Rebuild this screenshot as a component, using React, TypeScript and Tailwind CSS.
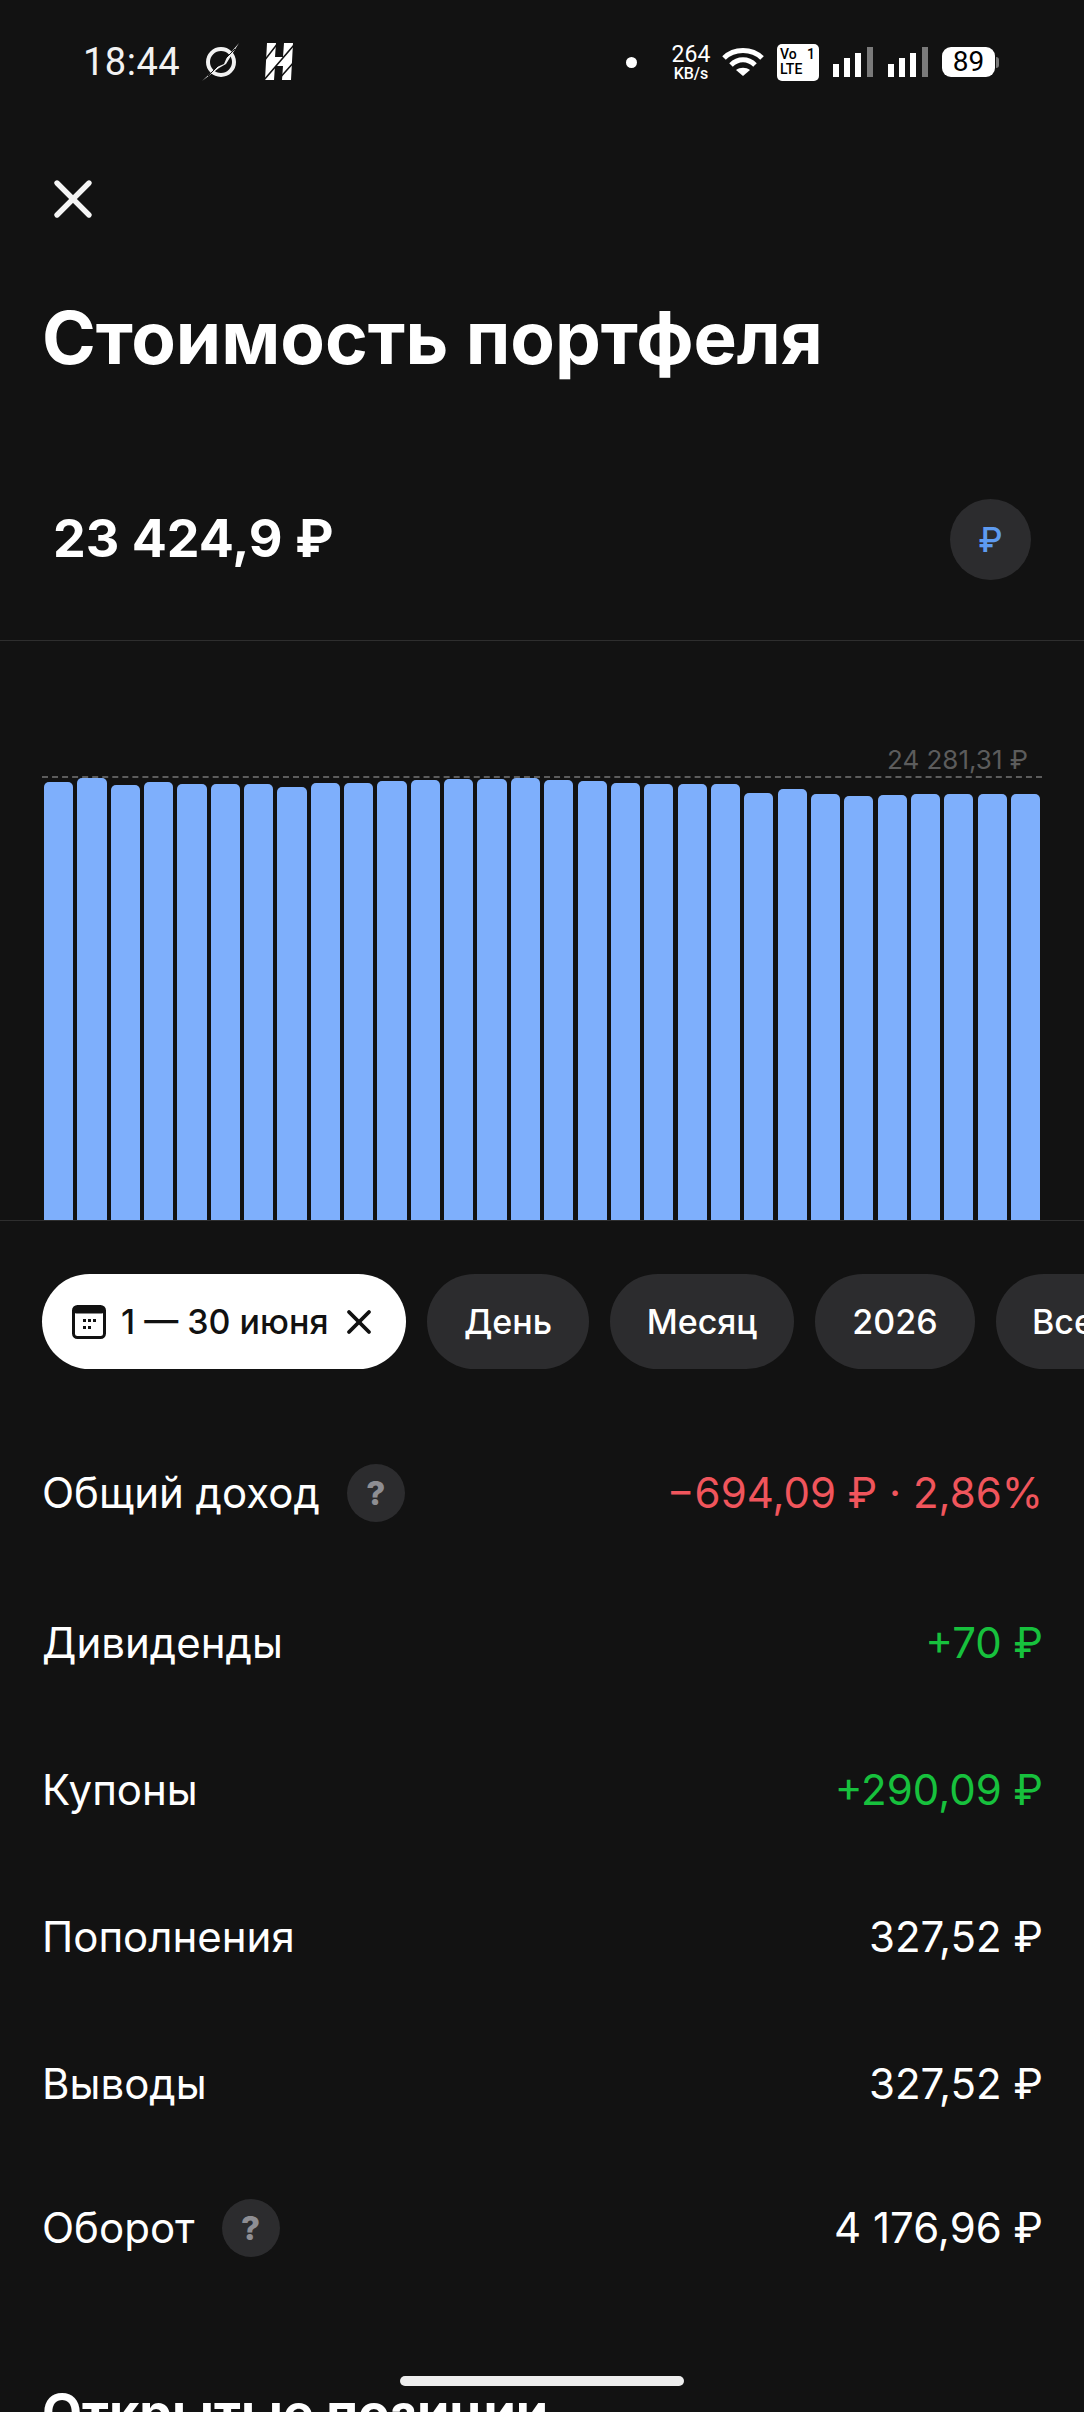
import { X } from "lucide-react"

const font = "font-['Inter','Noto_Sans',sans-serif]"

const tops = [782, 778, 785, 782, 784, 784, 784, 787, 783, 783, 781, 780, 779, 779, 778, 780, 781, 783, 784, 784, 784, 793, 789, 794, 796, 795, 794, 794, 794, 794]

const rows = [
  { label: "Общий доход", help: true, value: "−694,09 ₽ · 2,86%", color: "text-[#f0555c]", gap: "mt-[94px]" },
  { label: "Дивиденды", help: false, value: "+70 ₽", color: "text-[#17c13d]", gap: "mt-[90px]" },
  { label: "Купоны", help: false, value: "+290,09 ₽", color: "text-[#17c13d]", gap: "mt-[87px]" },
  { label: "Пополнения", help: false, value: "327,52 ₽", color: "text-white", gap: "mt-[87px]" },
  { label: "Выводы", help: false, value: "327,52 ₽", color: "text-white", gap: "mt-[87px]" },
  { label: "Оборот", help: true, value: "4 176,96 ₽", color: "text-white", gap: "mt-[84px]" },
]

function Signal() {
  return (
    <svg width="40" height="30" viewBox="0 0 40 30">
      <rect x="0" y="17" width="6" height="13" fill="#fff" />
      <rect x="11" y="11" width="6" height="19" fill="#fff" />
      <rect x="22" y="6" width="6" height="24" fill="#fff" />
      <rect x="34" y="0" width="6" height="30" fill="#7a7a7a" />
    </svg>
  )
}

function StatusBar() {
  return (
    <div className="h-[124px] pl-[83px] pr-[85px] flex items-center justify-between">
      <div className="flex items-center">
        <span className="font-['Roboto',sans-serif] text-[38px] text-[#f2f2f2] w-[119px] leading-none tracking-[0.5px]">18:44</span>
        <svg width="38" height="38" viewBox="0 0 38 38">
          <circle cx="19" cy="19" r="13" fill="none" stroke="#f2f2f2" strokeWidth="4" />
          <path d="M0 38 L15 24 L22 21 L25 14 L37 0 L24 21 L17 25 Z" fill="#f2f2f2" />
          <path d="M6 33 L33 6" stroke="#111" strokeWidth="1" />
        </svg>
        <svg width="30" height="38" viewBox="0 0 30 38" className="ml-[24px]">
          <path d="M3 0 H12 L11 14 H19 L20 0 H29 L27 37 H18 L19 23 H11 L10 37 H1 Z" fill="#fff" />
          <path d="M0 18 L14 0 M0 37 L30 2 M14 37 L30 19" stroke="#111" strokeWidth="1.5" />
        </svg>
      </div>
      <div className="flex items-center">
        <div className="w-[11px] h-[11px] rounded-full bg-white" />
        <div className="ml-[34px] w-[40px] flex flex-col items-center font-['Roboto',sans-serif] text-white leading-none">
          <span className="text-[23px] h-[21px] leading-[21px]">264</span>
          <span className="text-[16px] h-[15px] leading-[17px] font-medium">KB/s</span>
        </div>
        <svg width="42" height="30" viewBox="0 0 42 30" className="ml-[11px]" fill="none" stroke="#fff" strokeWidth="5">
          <path d="M2 11 C12 1 30 1 40 11" />
          <path d="M9 18 C16 11 26 11 33 18" />
          <path d="M21 29 L14 23 C18 20 24 20 28 23 Z" fill="#fff" stroke="none" />
        </svg>
        <div className="ml-[13px] w-[42px] h-[37px] rounded-[5px] bg-white text-black font-['Roboto',sans-serif] font-medium text-[14px] leading-[15px] px-[3px] pt-[3px]">
          <div className="flex justify-between pr-[1px]"><span>Vo</span><span>1</span></div>
          <div>LTE</div>
        </div>
        <div className="ml-[14px]"><Signal /></div>
        <div className="ml-[15px]"><Signal /></div>
        <div className="ml-[14px] w-[53px] h-[30px] rounded-[9px] bg-white text-black font-['Roboto',sans-serif] text-[28px] leading-[30px] text-center">89</div>
        <div className="ml-[1px] w-[3px] h-[11px] bg-[#777] rounded-r-sm" />
      </div>
    </div>
  )
}

function Help() {
  return (
    <div className="w-[58px] h-[58px] rounded-full bg-[#2c2c2e] flex items-center justify-center text-[#8e8e93] text-[33px] font-extrabold leading-none">?</div>
  )
}

export default function App() {
  return (
    <div className={`relative w-[1084px] h-[2412px] overflow-hidden bg-[#121212] text-white ${font}`}>
      <StatusBar />

      <div className="h-[150px] pl-[41px] flex items-center">
        <X size={64} strokeWidth={2} color="#f5f5f5" />
      </div>

      <div className="h-[128px] pl-[42px] flex items-center text-[72.8px] font-bold leading-none">
        Стоимость портфеля
      </div>

      <div className="mt-[69px] mb-[33px] h-[136px] pl-[53px] pr-[53px] flex items-center justify-between">
        <span className="text-[52px] font-bold leading-none">23 424,9 ₽</span>
        <div className="w-[81px] h-[81px] rounded-full bg-[#2c2c2e] flex items-center justify-center text-[#5e9bf0] text-[34px] font-medium">₽</div>
      </div>

      <div className="relative h-[581px] border-y border-[#2e2e2e] px-[44px] flex items-end gap-[4.2px]">
        <div className="absolute right-[56px] top-[106px] text-[26px] leading-none text-[#5c5c5c]">24 281,31 ₽</div>
        <div className="absolute left-[42px] right-[42px] top-[135px] border-t-2 border-dashed border-[#5c5c5c]" />
        {tops.map((t, i) => (
          <div key={i} className="flex-1 bg-[#7eaffc] rounded-t-[5px]" style={{ height: 1220 - t }} />
        ))}
      </div>

      <div className="mt-[53px] h-[95px] pl-[42px] flex gap-[21px] text-[34px] font-medium leading-none whitespace-nowrap">
        <div className="w-[364px] shrink-0 rounded-full bg-white text-[#111] flex items-center pl-[30px]">
          <svg width="34" height="34" viewBox="0 0 34 34" className="shrink-0">
            <rect x="1.5" y="1.5" width="31" height="31" rx="4" fill="none" stroke="#111" strokeWidth="3" />
            <rect x="1.5" y="1.5" width="31" height="7" rx="3" fill="#111" />
            <g fill="#111">
              <rect x="11" y="14" width="3" height="3" />
              <rect x="16" y="14" width="3" height="3" />
              <rect x="21" y="14" width="3" height="3" />
              <rect x="11" y="21" width="3" height="3" />
              <rect x="16" y="21" width="3" height="3" />
            </g>
          </svg>
          <span className="ml-[15px]">1 — 30 июня</span>
          <X size={40} strokeWidth={2.3} className="ml-[10px] shrink-0" />
        </div>
        <div className="shrink-0 w-[162px] rounded-full bg-[#2c2c2e] flex items-center justify-center">День</div>
        <div className="shrink-0 w-[184px] rounded-full bg-[#2c2c2e] flex items-center justify-center">Месяц</div>
        <div className="shrink-0 w-[160px] rounded-full bg-[#2c2c2e] flex items-center justify-center">2026</div>
        <div className="shrink-0 w-[160px] rounded-full bg-[#2c2c2e] flex items-center pl-[36px]">Все</div>
      </div>

      <div className="pl-[42px] pr-[41px]">
        {rows.map((r) => (
          <div key={r.label} className={`h-[60px] flex items-center justify-between text-[42px] leading-none ${r.gap}`}>
            <div className="flex items-center gap-[27px]">
              <span>{r.label}</span>
              {r.help && <Help />}
            </div>
            <span className={r.color}>{r.value}</span>
          </div>
        ))}
      </div>

      <div className="mt-[129px] pl-[42px] text-[52px] font-bold leading-none whitespace-nowrap">Открытые позиции</div>

      <div className="absolute left-[400px] top-[2376px] w-[284px] h-[10px] rounded-full bg-[#eeeeee]" />
    </div>
  )
}
